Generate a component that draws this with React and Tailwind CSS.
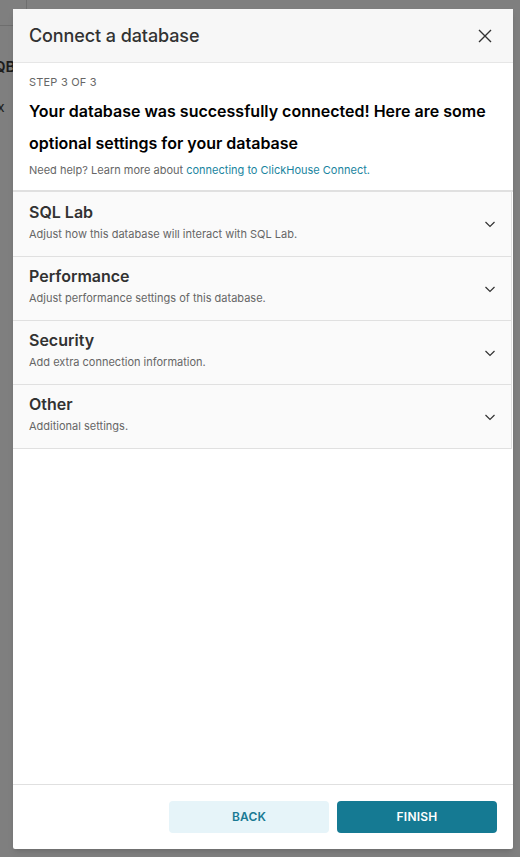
import React from 'react';

const sections = [
  { title: 'SQL Lab', desc: 'Adjust how this database will interact with SQL Lab.' },
  { title: 'Performance', desc: 'Adjust performance settings of this database.' },
  { title: 'Security', desc: 'Add extra connection information.' },
  { title: 'Other', desc: 'Additional settings.' },
];

const Chevron = () => (
  <svg className="w-[12px] h-[12px]" viewBox="0 0 12 12" fill="none" stroke="#323232" strokeWidth="1.2">
    <path d="M1.5 4l4.5 4.5L10.5 4" />
  </svg>
);

const App = () => {
  return (
    <div className="relative w-[520px] h-[857px] bg-[#7f7f7f] overflow-hidden" style={{ fontFamily: 'Inter, sans-serif' }}>
      {/* page behind the mask */}
      <div className="absolute inset-0">
        <div className="absolute left-[26px] top-0 h-[26px] w-px bg-[#6e6e6e]" />
        <div className="absolute left-0 top-[25px] w-[26px] h-px bg-[#6e6e6e]" />
        <div className="absolute left-[-6px] top-[56px] text-[15px] font-semibold text-[#1c1c1c]">QB</div>
        <div className="absolute left-[-3px] top-[96px] text-[14px] text-[#1c1c1c]">x</div>
      </div>

      <div className="relative ml-[13px] mt-[9px] w-[500px] h-[840px] bg-white rounded-[2px] flex flex-col shadow-md">
        {/* Header */}
        <div className="h-[54px] bg-[#f7f7f7] border-b border-[#e6e6e6] flex items-center justify-between pl-[16px] pr-[20px] shrink-0">
          <div className="text-[18px] font-medium text-[#323232] tracking-[-0.1px]">Connect a database</div>
          <svg className="w-[16px] h-[16px]" viewBox="0 0 16 16" fill="none" stroke="#323232" strokeWidth="1.4">
            <path d="M2 2l12 12M14 2L2 14" />
          </svg>
        </div>

        {/* Body */}
        <div className="flex-1 flex flex-col">
          <div className="px-[16px] pt-[11px] pb-[12px] border-b-2 border-[#e0e0e0]">
            <div className="text-[11px] text-[#666666] tracking-[0.2px] leading-[16px]">STEP 3 OF 3</div>
            <div className="text-[16px] font-semibold text-[#000000] leading-[32px] mt-[5px]">
              Your database was successfully connected! Here are some optional settings for your database
            </div>
            <div className="text-[11px] text-[#666666] leading-[16px] mt-[3px]">
              Need help? Learn more about{' '}
              <span className="text-[#1a85a0]">connecting to ClickHouse Connect.</span>
            </div>
          </div>

          <div className="mr-[1px] border-r border-b border-[#e0e0e0]">
            {sections.map((s, i) => (
              <div
                key={s.title}
                className={`h-[64px] bg-[#fafafa] flex items-center justify-between pl-[16px] pr-[15px] ${i > 0 ? 'border-t border-[#e0e0e0]' : ''}`}
              >
                <div className="flex flex-col pb-[6px]">
                  <div className="text-[16px] font-semibold text-[#323232] leading-[22px]">{s.title}</div>
                  <div className="text-[11px] text-[#666666] leading-[16px] mt-[3px]">{s.desc}</div>
                </div>
                <Chevron />
              </div>
            ))}
          </div>
        </div>

        {/* Footer */}
        <div className="h-[65px] border-t border-[#e0e0e0] flex items-center justify-end gap-[8px] pr-[16px] shrink-0">
          <button className="w-[160px] h-[32px] rounded-[4px] bg-[#e6f4f9] text-[#1a7a94] text-[12px] font-semibold tracking-[0.2px]">
            BACK
          </button>
          <button className="w-[160px] h-[32px] rounded-[4px] bg-[#157a93] text-white text-[12px] font-semibold tracking-[0.2px]">
            FINISH
          </button>
        </div>
      </div>
    </div>
  );
};

export default App;
